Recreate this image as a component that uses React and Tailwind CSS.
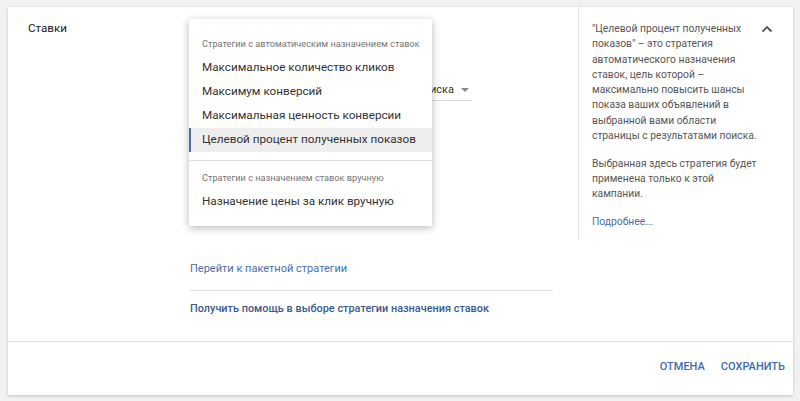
import React from "react";

const autoItems = [
  "Максимальное количество кликов",
  "Максимум конверсий",
  "Максимальная ценность конверсии",
  "Целевой процент полученных показов",
];

const StrategyMenu = () => (
  <div className="absolute left-[181px] top-[12px] w-[243px] bg-white shadow-[0_2px_8px_rgba(0,0,0,0.28)] pt-[13px] pb-[12px] whitespace-nowrap">
    {/* Auto strategies */}
    <div className="h-[24px] flex items-center px-[13px] text-[9.2px] text-[#757575]">
      Стратегии с автоматическим назначением ставок
    </div>
    {autoItems.map((item, i) => (
      <div
        key={item}
        className={
          i === 3
            ? "h-[24px] flex items-center pl-[11px] border-l-2 border-[#4a6ea9] bg-[#eeeeee] text-[11.7px] text-[#333]"
            : "h-[24px] flex items-center px-[13px] text-[11.7px] text-[#333]"
        }
      >
        {item}
      </div>
    ))}
    <div className="mt-[8px] border-t border-[#e0e0e0]" />

    {/* Manual strategies */}
    <div className="mt-[5px] h-[24px] flex items-center px-[13px] text-[9.2px] text-[#757575]">
      Стратегии с назначением ставок вручную
    </div>
    <div className="h-[24px] flex items-center px-[13px] text-[11.7px] text-[#333]">
      Назначение цены за клик вручную
    </div>
  </div>
);

const App = () => (
  <div className="w-[800px] h-[401px] bg-[#f1f1f1] pt-[7px] px-[8px] font-['Roboto',sans-serif]">
    <div className="relative w-[785px] h-[388px] bg-white shadow-[0_1px_3px_rgba(0,0,0,0.2)] flex flex-col">
      {/* Top section */}
      <div className="h-[335px] flex border-b border-[#e0e0e0]">
        {/* Title */}
        <div className="w-[182px] pl-[20px] pt-[13px] text-[11.6px] text-[#212121]">Ставки</div>

        {/* Main column */}
        <div className="w-[363px] flex flex-col">
          <div className="mt-[73px] w-[282px] h-[21px] flex items-center justify-end border-b border-[#dcdcdc] pr-[3px]">
            <span className="text-[11px] text-[#333]">Верх страницы поиска</span>
            <svg width="8" height="4" viewBox="0 0 8 4" className="ml-[7px]">
              <path d="M0 0 L8 0 L4 4 Z" fill="#888" />
            </svg>
          </div>
          <div className="mt-[160px] h-[16px] leading-[16px] text-[11px] text-[#4a6ea9]">
            Перейти к пакетной стратегии
          </div>
          <div className="mt-[13px] border-t border-[#e0e0e0]" />
          <div className="mt-[10px] h-[16px] leading-[16px] text-[10.9px] font-medium text-[#3b5a8c]">
            Получить помощь в выборе стратегии назначения ставок
          </div>
        </div>

        {/* Help panel */}
        <div className="ml-[25px] h-[233px] border-l border-[#e0e0e0] pl-[13px] pt-[14px] flex">
          <div className="w-[166px] text-[10.3px] leading-[15.3px] text-[#555] whitespace-nowrap">
            <p>
              "Целевой процент полученных
              <br />
              показов" – это стратегия
              <br />
              автоматического назначения
              <br />
              ставок, цель которой –
              <br />
              максимально повысить шансы
              <br />
              показа ваших объявлений в
              <br />
              выбранной вами области
              <br />
              страницы с результатами поиска.
            </p>
            <p className="mt-[14px] leading-[14.6px]">
              Выбранная здесь стратегия будет
              <br />
              применена только к этой
              <br />
              кампании.
            </p>
            <p className="mt-[13px] text-[#4a6ea9]">Подробнее...</p>
          </div>
          <div className="ml-[3px] pt-[4px]">
            <svg width="12" height="8" viewBox="0 0 12 8">
              <path d="M1.5 6.5 L6 2 L10.5 6.5" fill="none" stroke="#555" strokeWidth="1.8" />
            </svg>
          </div>
        </div>
      </div>

      {/* Footer */}
      <div className="flex-1 flex items-center justify-end gap-[16px] pr-[8px] pb-[2px]">
        <button className="text-[11px] font-medium text-[#3d6ab0]">ОТМЕНА</button>
        <button className="text-[11px] font-medium text-[#3d6ab0]">СОХРАНИТЬ</button>
      </div>

      <StrategyMenu />
    </div>
  </div>
);

export default App;
